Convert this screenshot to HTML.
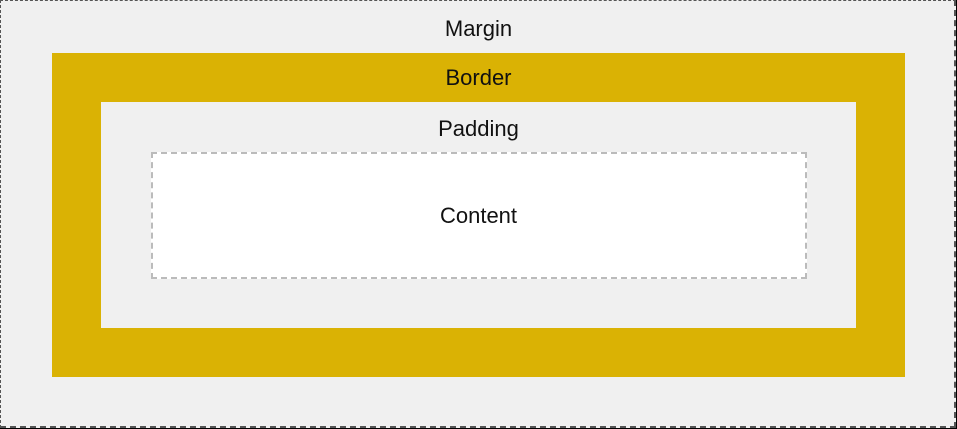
<!DOCTYPE html>
<html><head><style>
html,body{margin:0;padding:0;background:#000;}
body{width:957px;height:429px;position:relative;overflow:hidden;font-family:"Liberation Sans",sans-serif;}
.m{position:absolute;left:0;top:0;width:953px;height:425px;background:#f0f0f0;border:1px dashed #555;border-width:1px 2px 2px 1px;}
.b{position:absolute;left:52px;top:53px;width:853px;height:324px;background:#dab204;}
.p{position:absolute;left:101px;top:102px;width:755px;height:226px;background:#f0f0f0;}
.c{position:absolute;left:151px;top:152px;width:652px;height:123px;background:#fff;border:2px dashed #bbb;}
.t{position:absolute;left:0;width:957px;text-align:center;font-size:22px;line-height:24px;color:#111;}
</style></head><body>
<div class="m"></div>
<div class="b"></div>
<div class="p"></div>
<div class="c"></div>
<div class="t" style="top:17px">Margin</div>
<div class="t" style="top:66px">Border</div>
<div class="t" style="top:117px">Padding</div>
<div class="t" style="top:204px">Content</div>
</body></html>
